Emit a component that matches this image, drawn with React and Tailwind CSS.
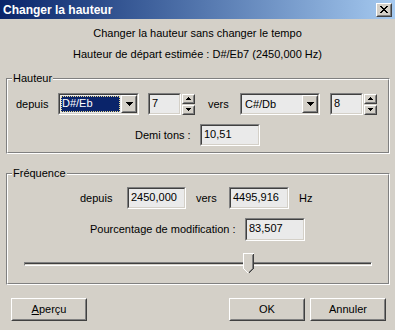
const FACE = "bg-[#D4D0C8]";

function Sunken({ className = "", inner = "bg-[#EAEAEA]", children }) {
  return (
    <div className={`border border-t-[#808080] border-l-[#808080] border-b-white border-r-white ${className}`}>
      <div className={`w-full h-full border border-t-[#404040] border-l-[#404040] border-b-[#D4D0C8] border-r-[#D4D0C8] ${inner}`}>
        {children}
      </div>
    </div>
  );
}

function Raised({ className = "", children }) {
  return (
    <div className={`border border-t-white border-l-white border-b-[#404040] border-r-[#404040] ${FACE} ${className}`}>
      <div className="w-full h-full border border-t-[#D4D0C8] border-l-[#D4D0C8] border-b-[#808080] border-r-[#808080] flex items-center justify-center">
        {children}
      </div>
    </div>
  );
}

function Etched({ className = "", label, children }) {
  return (
    <div className={`relative border border-t-[#808080] border-l-[#808080] border-b-white border-r-white ${className}`}>
      <div className="w-full h-full border border-t-white border-l-white border-b-[#808080] border-r-[#808080]">
        {children}
      </div>
      <span className={`absolute left-[5px] top-[-7px] px-[1px] leading-[13px] ${FACE}`}>{label}</span>
    </div>
  );
}

function Edit({ value, className = "" }) {
  return (
    <Sunken className={className}>
      <div className="pl-[2px] pt-[2px] leading-[13px]">{value}</div>
    </Sunken>
  );
}

function DownArrow({ w = 7, h = 4 }) {
  return (
    <svg width={w} height={h} viewBox={`0 0 ${w} ${h}`} shapeRendering="crispEdges">
      <polygon points={`0,0 ${w},0 ${w / 2},${h}`} fill="#000" />
    </svg>
  );
}

function UpArrow({ w = 5, h = 3 }) {
  return (
    <svg width={w} height={h} viewBox={`0 0 ${w} ${h}`} shapeRendering="crispEdges">
      <polygon points={`0,${h} ${w},${h} ${w / 2},0`} fill="#000" />
    </svg>
  );
}

function Combo({ value, selected, className = "" }) {
  return (
    <Sunken className={className}>
      <div className="flex h-full">
        <div className="flex-1 p-[1px]">
          {selected ? (
            <div className="h-full bg-[#0A246A] text-white outline-1 outline-dotted outline-[#E8D890] -outline-offset-1 pl-[1px] leading-[15px]">
              {value}
            </div>
          ) : (
            <div className="pl-[2px] leading-[17px]">{value}</div>
          )}
        </div>
        <Raised className="w-[16px] h-full">
          <DownArrow />
        </Raised>
      </div>
    </Sunken>
  );
}

function Spin({ className = "" }) {
  return (
    <div className={`flex flex-col gap-[1px] ${className}`}>
      <Raised className="w-[13px] h-[10px]">
        <UpArrow />
      </Raised>
      <Raised className="w-[13px] h-[10px]">
        <DownArrow w={5} h={3} />
      </Raised>
    </div>
  );
}

function Thumb() {
  return (
    <svg width="11" height="21" viewBox="0 0 11 21" shapeRendering="crispEdges">
      <polygon points="0.5,0.5 10.5,0.5 10.5,15.5 5.5,20.5 0.5,15.5" fill="#D4D0C8" />
      <polyline points="0.5,15.5 0.5,0.5 10.5,0.5" fill="none" stroke="#fff" />
      <polyline points="10.5,0.5 10.5,15.5 5.5,20.5" fill="none" stroke="#404040" />
      <polyline points="9.5,1.5 9.5,15.5 5.5,19.5" fill="none" stroke="#808080" />
      <polyline points="0.5,15.5 5.5,20.5" fill="none" stroke="#fff" />
    </svg>
  );
}

export default function App() {
  return (
    <div
      className={`w-[395px] h-[330px] ${FACE} text-black text-[11px] flex flex-col overflow-hidden`}
      style={{ fontFamily: '"Liberation Sans", Arial, sans-serif' }}
    >
      {/* Title bar */}
      <div className="h-[19px] flex items-center justify-between bg-gradient-to-r from-[#0A246A] to-[#A6CAF0] pl-[3px] pr-[3px]">
        <span className="text-white font-bold text-[12px] leading-[14px]">Changer la hauteur</span>
        <Raised className="w-[16px] h-[14px]">
          <svg width="8" height="7" viewBox="0 0 8 7" shapeRendering="crispEdges">
            <path d="M0 0h2v1h-2zM6 0h2v1h-2zM1 1h2v1h-2zM5 1h2v1h-2zM2 2h4v1h-4zM3 3h2v1h-2zM2 4h4v1h-4zM1 5h2v1h-2zM5 5h2v1h-2zM0 6h2v1h-2zM6 6h2v1h-2z" fill="#000" />
          </svg>
        </Raised>
      </div>

      <div className="mt-[8px] text-center leading-[13px]">Changer la hauteur sans changer le tempo</div>
      <div className="mt-[8px] text-center leading-[13px]">Hauteur de départ estimée : D#/Eb7 (2450,000 Hz)</div>

      {/* Hauteur */}
      <Etched label="Hauteur" className="mt-[17px] ml-[6px] w-[384px] h-[76px]">
        <div className="pt-[13px] pl-[8px] flex flex-col">
          <div className="flex items-center h-[22px]">
            <span className="w-[42px]">depuis</span>
            <Combo value="D#/Eb" selected className="w-[81px] h-[22px]" />
            <Edit value="7" className="ml-[9px] w-[33px] h-[22px]" />
            <Spin className="ml-[1px]" />
            <span className="ml-[13px] w-[32px]">vers</span>
            <Combo value="C#/Db" className="w-[80px] h-[22px]" />
            <Edit value="8" className="ml-[10px] w-[33px] h-[22px]" />
            <Spin className="ml-[1px]" />
          </div>
          <div className="flex items-center mt-[9px] h-[22px]">
            <span className="ml-[119px] w-[65px]">Demi tons :</span>
            <Edit value="10,51" className="w-[60px] h-[22px]" />
          </div>
        </div>
      </Etched>

      {/* Fréquence */}
      <Etched label="Fréquence" className="mt-[19px] ml-[6px] w-[384px] h-[112px]">
        <div className="pt-[12px] flex flex-col">
          <div className="flex items-center h-[22px]">
            <span className="ml-[72px] w-[47px]">depuis</span>
            <Edit value="2450,000" className="w-[59px] h-[22px]" />
            <span className="ml-[10px] w-[33px]">vers</span>
            <Edit value="4495,916" className="w-[60px] h-[22px]" />
            <span className="ml-[10px]">Hz</span>
          </div>
          <div className="flex items-center mt-[9px] h-[23px]">
            <span className="ml-[82px] w-[155px]">Pourcentage de modification :</span>
            <Edit value="83,507" className="w-[60px] h-[23px]" />
          </div>
          <div className="relative mt-[12px] ml-[16px] w-[348px] h-[21px] flex items-center">
            <div className="w-full h-[4px] border border-t-[#808080] border-l-[#808080] border-b-white border-r-white">
              <div className="w-full h-full border-t border-t-[#404040]" />
            </div>
            <div className="absolute left-[219px] top-0 leading-none">
              <Thumb />
            </div>
          </div>
        </div>
      </Etched>

      {/* Buttons */}
      <div className="mt-[13px] flex">
        <Raised className="ml-[11px] w-[76px] h-[23px]">
          <span><span className="underline">A</span>perçu</span>
        </Raised>
        <Raised className="ml-[142px] w-[76px] h-[23px]">
          <span>OK</span>
        </Raised>
        <Raised className="ml-[5px] w-[76px] h-[23px]">
          <span>Annuler</span>
        </Raised>
      </div>
    </div>
  );
}
